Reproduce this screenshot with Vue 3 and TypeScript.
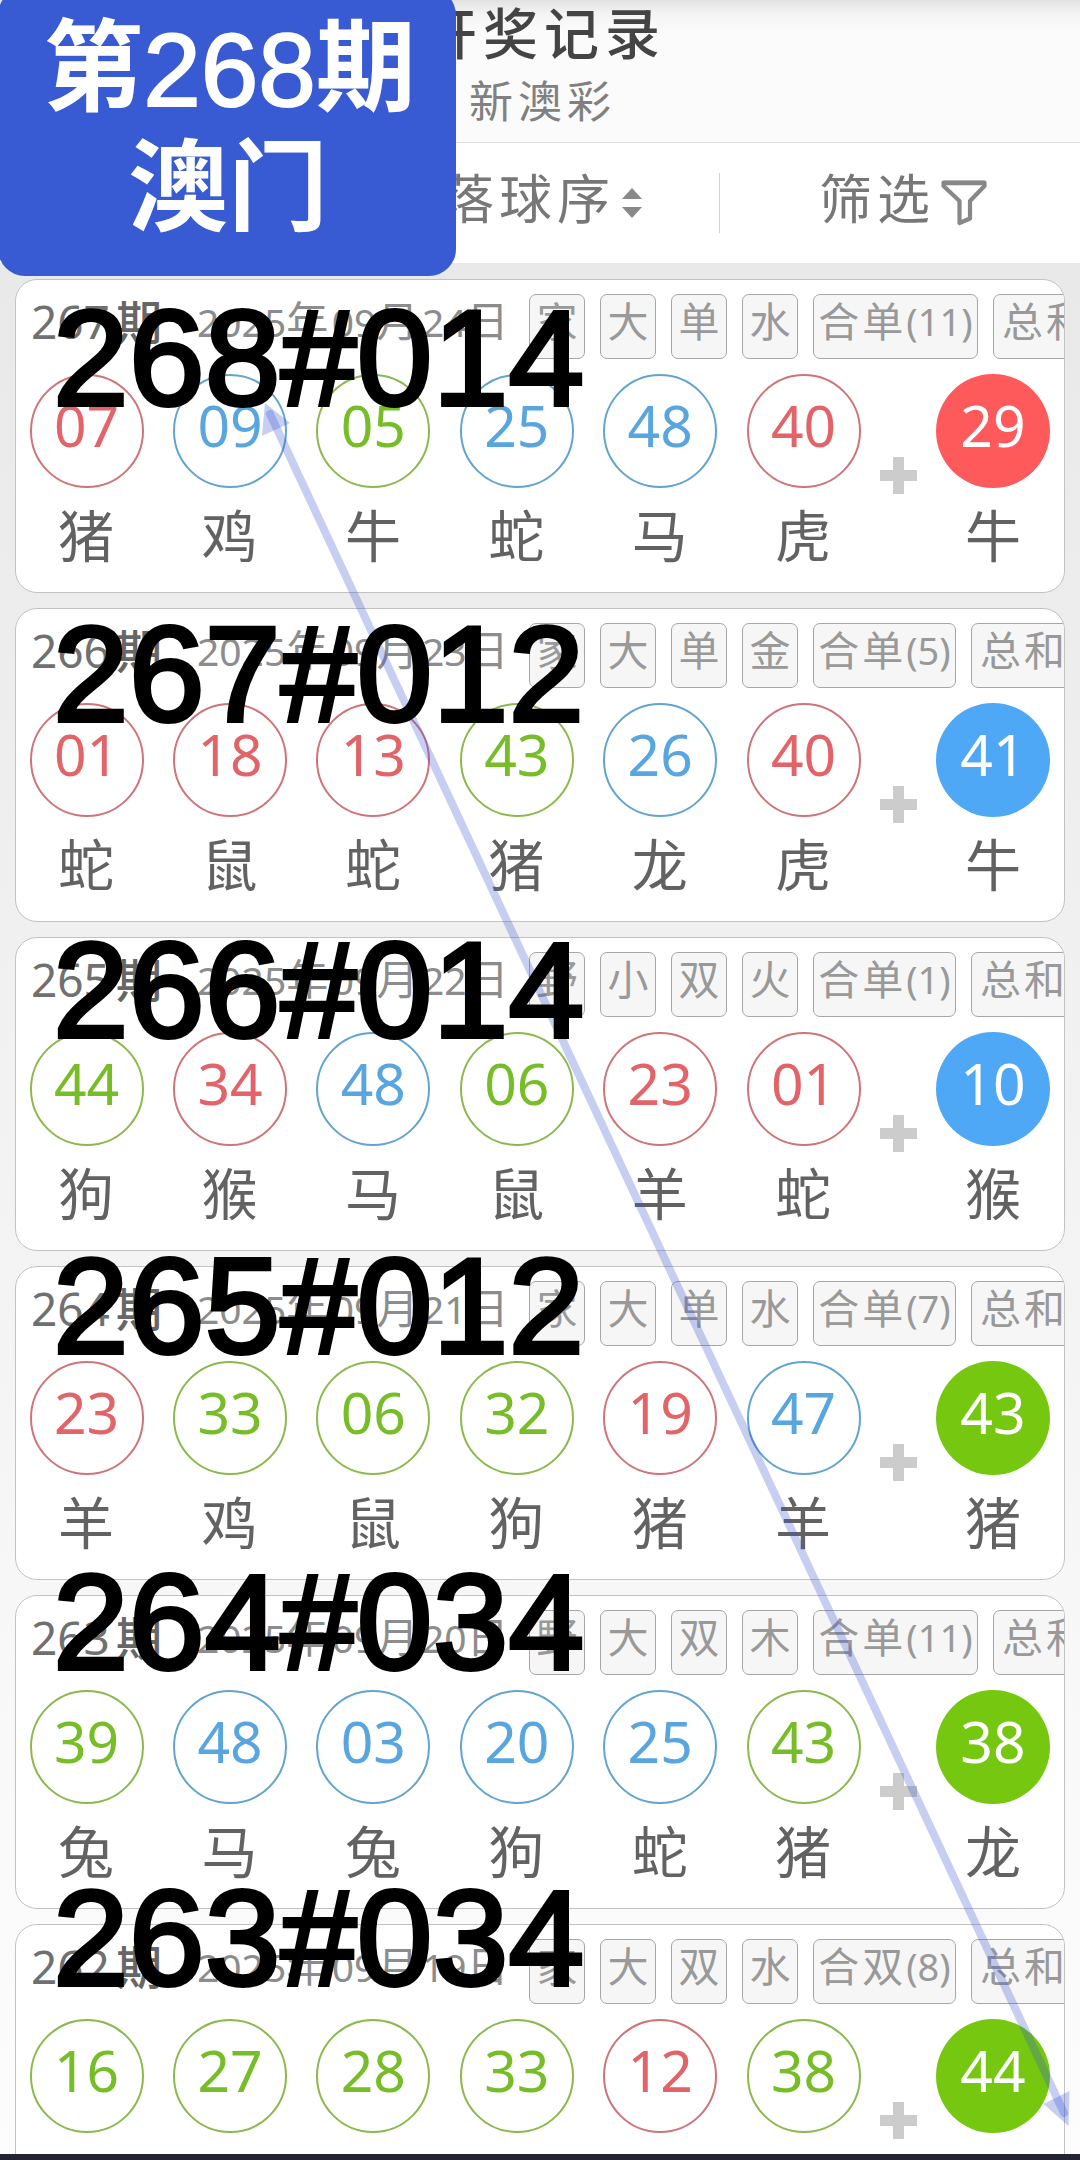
<script setup lang="ts">
type Tone = 'red' | 'blue' | 'green'

interface Ball {
  num: string
  tone: Tone
  animal: string
}

interface Draw {
  period: string
  day: string
  tags: string[]
  balls: Ball[]
  special: Ball
}

const toneOf: Record<string, Tone> = { r: 'red', b: 'blue', g: 'green' }

function balls(spec: string): Ball[] {
  return spec.split(' ').map((s) => ({
    num: s.slice(0, 2),
    tone: toneOf[s[2]],
    animal: s.slice(3),
  }))
}

function draw(period: string, day: string, tags: string, spec: string): Draw {
  const all = balls(spec)
  return { period, day, tags: tags.split(' '), balls: all.slice(0, 6), special: all[6] }
}

const draws: Draw[] = [
  draw('267', '24', '家 大 单 水 合单(11) 总和', '07r猪 09b鸡 05g牛 25b蛇 48b马 40r虎 29r牛'),
  draw('266', '23', '家 大 单 金 合单(5) 总和', '01r蛇 18r鼠 13r蛇 43g猪 26b龙 40r虎 41b牛'),
  draw('265', '22', '野 小 双 火 合单(1) 总和', '44g狗 34r猴 48b马 06g鼠 23r羊 01r蛇 10b猴'),
  draw('264', '21', '家 大 单 水 合单(7) 总和', '23r羊 33g鸡 06g鼠 32g狗 19r猪 47b羊 43g猪'),
  draw('263', '20', '野 大 双 木 合单(11) 总和', '39g兔 48b马 03b兔 20b狗 25b蛇 43g猪 38g龙'),
  draw('262', '19', '家 大 双 水 合双(8) 总和', '16g虎 27g兔 28g虎 33g鸡 12r马 38g龙 44g狗'),
]

const notes: string[] = ['268#014', '267#012', '266#014', '265#012', '264#034', '263#034']

function tagSize(tag: string): string {
  if (tag.length === 1) return 'one'
  if (tag.length === 5) return 'mid'
  if (tag.length === 6) return 'wide'
  return 'open'
}

function runs(text: string): { t: string; han: boolean }[] {
  return (text.match(/[\u4e00-\u9fff]+|[^\u4e00-\u9fff]+/g) ?? []).map((t) => ({
    t,
    han: /[\u4e00-\u9fff]/.test(t),
  }))
}
</script>

<template>
  <div class="screen">
    <header class="head">
      <div class="title">开奖记录</div>
      <div class="sub">新澳彩</div>
    </header>

    <nav class="bar">
      <div class="seg sort">
        <span>落球序</span>
        <svg width="20" height="30" viewBox="0 0 20 30">
          <path d="M10 0 20 11H0zM0 19H20L10 30z" fill="#888" />
        </svg>
      </div>
      <div class="line"></div>
      <div class="seg pick">
        <span>筛选</span>
        <svg width="46" height="46" viewBox="0 0 46 46">
          <path
            d="M2.5 2.5H43.5V6L29 21V38.500L18.500 43V21L2.500 6Z"
            fill="none"
            stroke="#888"
            stroke-width="4.200"
            stroke-linejoin="round"
          />
          <path d="M2 3H44" stroke="#888" stroke-width="4.500" />
        </svg>
      </div>
    </nav>

    <main class="list">
      <section v-for="d in draws" :key="d.period" class="card">
        <div class="meta">
          <div class="period">{{ d.period }}<b>期</b></div>
          <div class="date">2025<i>年</i>09<i>月</i>{{ d.day }}<i>日</i></div>
          <div v-for="t in d.tags" :key="t" class="tag" :class="tagSize(t)">
            <span v-for="r in runs(t)" :key="r.t" :class="{ han: r.han }">{{ r.t }}</span>
          </div>
        </div>
        <div class="row">
          <div v-for="(b, i) in d.balls" :key="i" class="cell">
            <div class="ball" :class="b.tone"><span>{{ b.num }}</span></div>
            <div class="animal">{{ b.animal }}</div>
          </div>
          <div class="plus"></div>
          <div class="cell last">
            <div class="ball solid" :class="d.special.tone"><span>{{ d.special.num }}</span></div>
            <div class="animal">{{ d.special.animal }}</div>
          </div>
        </div>
      </section>
    </main>

    <svg class="arrow" width="1080" height="2160" viewBox="0 0 1080 2160">
      <g fill="#3c55d2" fill-opacity="0.29">
        <path d="M265 403 290 423 262 436z" />
        <path d="M1068.500 2126 1043.500 2104 1069.500 2091z" />
      </g>
      <path
        d="M270 414 1064 2113"
        stroke="#3c55d2"
        stroke-opacity="0.29"
        stroke-width="8"
        stroke-linecap="round"
      />
    </svg>

    <div class="notes">
      <div v-for="n in notes" :key="n" class="note">{{ n }}</div>
    </div>

    <div class="badge">
      <div><b>第</b>268<b>期</b></div>
      <div><b>澳门</b></div>
    </div>

    <div class="foot"></div>
  </div>
</template>

<style>
body {
  margin: 0;
}
</style>

<style scoped>
.screen {
  position: relative;
  width: 1080px;
  height: 2160px;
  overflow: hidden;
  background: linear-gradient(#e9e9e9 263px, #fdfdfd 2160px);
  font-family: 'Noto Sans', 'Noto Sans CJK SC', sans-serif;
  white-space: nowrap;
}
.head {
  box-sizing: border-box;
  height: 143px;
  border-bottom: 1px solid #dcdcdc;
  background: linear-gradient(#e2e2e2, #f4f4f4 14px, #fbfbfb 32px);
  text-align: center;
  font-family: 'Noto Sans CJK SC', sans-serif;
}
.title {
  height: 68px;
  line-height: 60px;
  font-size: 55px;
  font-weight: 500;
  letter-spacing: 6px;
  color: #444;
  padding-left: 8px;
}
.sub {
  height: 68px;
  line-height: 62px;
  font-size: 44px;
  letter-spacing: 5px;
  color: #808080;
  padding-left: 5px;
}
.bar {
  height: 120px;
  background: #fff;
  display: flex;
  align-items: center;
}
.seg {
  display: flex;
  align-items: center;
  box-sizing: border-box;
  font-family: 'Noto Sans CJK SC', sans-serif;
  font-size: 53px;
  letter-spacing: 5px;
  color: #777;
}
.seg span {
  line-height: 106px;
  height: 120px;
}
.sort {
  width: 719px;
  justify-content: flex-end;
  padding-right: 77px;
  gap: 7px;
}
.line {
  width: 1px;
  height: 60px;
  background: #d2d2d2;
}
.pick {
  padding-left: 99px;
  gap: 6px;
}
.list {
  display: flex;
  flex-direction: column;
  gap: 15px;
  padding: 16px 15px 0;
}
.card {
  box-sizing: border-box;
  height: 314px;
  flex-shrink: 0;
  border: 1px solid #c2c2c2;
  border-radius: 22px;
  background: #fff;
  overflow: hidden;
}
.meta {
  display: flex;
  padding: 14px 0 0 15px;
  height: 65px;
}
.period {
  width: 166px;
  flex-shrink: 0;
  font-size: 46px;
  line-height: 54px;
  color: #707070;
}
.period b {
  font-weight: 500;
  font-size: 46px;
  margin-left: 6px;
  color: #666;
}
.date {
  width: 332px;
  flex-shrink: 0;
  font-size: 39px;
  line-height: 54px;
  color: #8c8c8c;
}
.date i {
  font-style: normal;
  font-size: 42px;
  letter-spacing: 3.500px;
}
.period,
.date {
  height: 65px;
}
.tag {
  box-sizing: border-box;
  flex-shrink: 0;
  height: 65px;
  margin-right: 15px;
  border: 1px solid #a6a6a6;
  border-radius: 7px;
  background: #f6f6f6;
  color: #999;
  font-size: 38px;
  line-height: 53px;
  display: flex;
  justify-content: center;
}
.tag .han {
  font-size: 41px;
  letter-spacing: 3px;
}
.tag.one .han {
  letter-spacing: 0;
}
.one {
  width: 56px;
}
.mid {
  width: 143px;
}
.wide {
  width: 165px;
}
.open {
  width: 200px;
  justify-content: flex-start;
  padding-left: 8px;
}
.row {
  display: flex;
  padding: 15px 0 0 13.600px;
}
.cell {
  width: 114px;
  margin-right: 29.400px;
  flex-shrink: 0;
}
.ball {
  box-sizing: border-box;
  width: 114px;
  height: 114px;
  border: 2px solid;
  border-radius: 50%;
  text-align: center;
  font-size: 57px;
  line-height: 99px;
}
.red {
  border-color: #cf7479;
  color: #e26468;
}
.blue {
  border-color: #62a4d0;
  color: #58a5e0;
}
.green {
  border-color: #8bb94e;
  color: #76bd28;
}
.solid {
  border: none;
  padding-top: 2px;
  color: #fff;
}
.solid.red {
  background: #ff5a5b;
}
.solid.blue {
  background: #4ea8f6;
}
.solid.green {
  background: #75c80f;
}
.animal {
  height: 90px;
  line-height: 89px;
  text-align: center;
  font-family: 'Noto Sans CJK SC', sans-serif;
  font-size: 56px;
  color: #626262;
}
.cell:not(.last) .animal {
  text-indent: -1px;
}
.plus {
  width: 37px;
  height: 37px;
  margin: 83px 19px 0 -10px;
  flex-shrink: 0;
  background:
    linear-gradient(#ccc, #ccc) center / 11px 37px no-repeat,
    linear-gradient(#ccc, #ccc) center / 37px 11px no-repeat;
}
.last {
  margin-right: 0;
}
.arrow {
  position: absolute;
  left: 0;
  top: 0;
}
.notes {
  position: absolute;
  left: 53px;
  top: 200px;
  font-family: 'Liberation Sans', Arial, sans-serif;
  font-size: 136px;
  letter-spacing: 0.300px;
  color: #000;
  -webkit-text-stroke: 4px #000;
}
.note {
  height: 316px;
  line-height: 316px;
}
.badge {
  position: absolute;
  left: -2px;
  top: -12px;
  width: 458px;
  height: 287.500px;
  box-sizing: border-box;
  padding: 15px 0 0 2px;
  border-radius: 27px;
  background: #385ad2;
  color: #fff;
  text-align: center;
  font-family: 'Liberation Sans', 'Noto Sans CJK SC', sans-serif;
  font-size: 103.500px;
  line-height: 120px;
  -webkit-text-stroke: 2px #fff;
}
.badge div {
  height: 120px;
}
.badge div:first-child {
  padding-left: 3px;
}
.badge b {
  font-family: 'Noto Sans CJK SC', sans-serif;
  font-size: 100px;
  font-weight: 700;
  position: relative;
  top: -3px;
  -webkit-text-stroke: 0;
}
.foot {
  position: absolute;
  left: 0;
  right: 0;
  bottom: 0;
  height: 6px;
  background: #222430;
}
</style>
